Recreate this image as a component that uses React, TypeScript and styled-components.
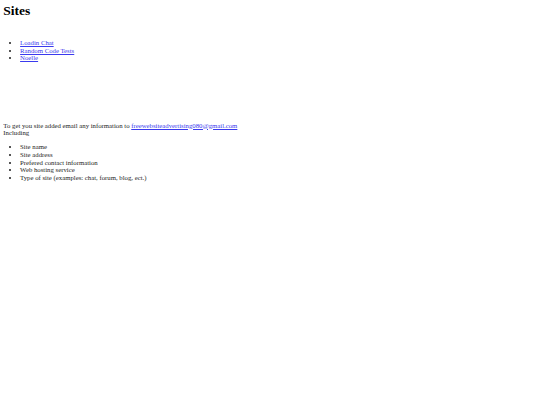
import React from 'react';
import styled, { createGlobalStyle } from 'styled-components';

// the reference is a plain browser page photographed at ~0.42 scale
const BASE = 6.75;
const LINE = 7.55;
const INDENT = 16.8;

const GlobalStyle = createGlobalStyle`
  html, body {
    background: #ffffff;
  }
  body {
    margin: 3.3px;
    font-family: "Liberation Serif", "Times New Roman", serif;
    font-size: ${BASE}px;
    line-height: ${LINE}px;
    color: #1c1c1c;
  }
`;

const Page = styled.div`
  display: flex;
  flex-direction: column;
`;

const Title = styled.h1`
  font-size: 13.5px;
  line-height: 15.5px;
  font-weight: bold;
  color: #000000;
  margin: 0 0 20.45px;
`;

const BulletList = styled.ul<{ $gap?: number }>`
  list-style: disc;
  margin: ${({ $gap }) => $gap ?? 0}px 0;
  padding-left: ${INDENT}px;
`;

const Item = styled.li`
  line-height: ${LINE}px;
`;

const Link = styled.a`
  color: #3a3aee;
  text-decoration: underline;
`;

const Note = styled.p`
  margin: 59.75px 0 0;
`;

const sites = ['Loadin Chat', 'Random Code Tests', 'Noelle'];

const requirements = [
  'Site name',
  'Site address',
  'Prefered contact information',
  'Web hosting service',
  'Type of site (examples: chat, forum, blog, ect.)',
];

const App = () => {
  return (
    <Page>
      <GlobalStyle />
      <Title>Sites</Title>
      <BulletList>
        {sites.map((site) => (
          <Item key={site}>
            <Link href="#">{site}</Link>
          </Item>
        ))}
      </BulletList>
      <Note>
        To get you site added email any information to{' '}
        <Link href="#">freewebsiteadvertising080@gmail.com</Link>
        <br />
        Including
      </Note>
      <BulletList $gap={BASE}>
        {requirements.map((req) => (
          <Item key={req}>{req}</Item>
        ))}
      </BulletList>
    </Page>
  );
};

export default App;
